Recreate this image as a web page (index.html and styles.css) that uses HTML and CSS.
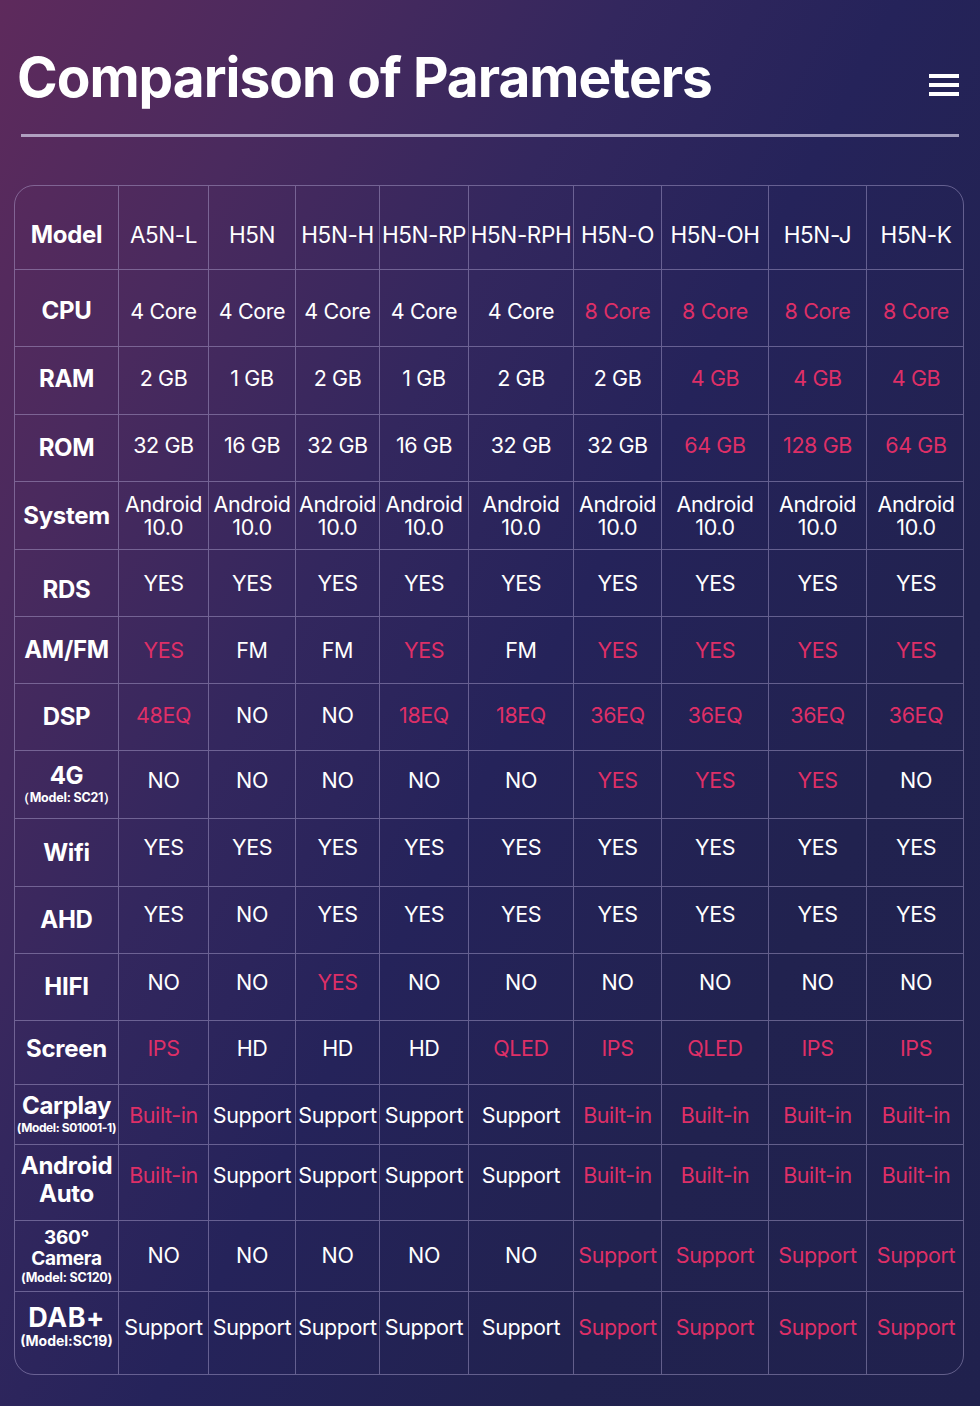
FILE: index.html
```html
<!DOCTYPE html>
<html lang="en">
<head>
<meta charset="utf-8">
<title>Comparison of Parameters</title>
<link rel="stylesheet" href="styles.css">
</head>
<body>
<div class="page">
  <header class="header">
    <h1 class="title">Comparison of Parameters</h1>
    <button class="menu" aria-label="Menu"><span></span><span></span><span></span></button>
  </header>
  <div class="divider"></div>

  <div class="table-wrap">
    <table class="spec">
      <colgroup>
        <col style="width:104px"><col style="width:90px"><col style="width:87px"><col style="width:84px"><col style="width:89px">
        <col style="width:105px"><col style="width:88px"><col style="width:107px"><col style="width:98px"><col style="width:98px">
      </colgroup>
      <tr class="r-head">
        <th>Model</th><td>A5N-L</td><td>H5N</td><td>H5N-H</td><td>H5N-RP</td><td>H5N-RPH</td><td>H5N-O</td><td>H5N-OH</td><td>H5N-J</td><td>H5N-K</td>
      </tr>
      <tr class="r-cpu">
        <th>CPU</th><td>4 Core</td><td>4 Core</td><td>4 Core</td><td>4 Core</td><td>4 Core</td><td class="hl">8 Core</td><td class="hl">8 Core</td><td class="hl">8 Core</td><td class="hl">8 Core</td>
      </tr>
      <tr class="r-68 lift6 thlift4">
        <th>RAM</th><td>2 GB</td><td>1 GB</td><td>2 GB</td><td>1 GB</td><td>2 GB</td><td>2 GB</td><td class="hl">4 GB</td><td class="hl">4 GB</td><td class="hl">4 GB</td>
      </tr>
      <tr class="r-67 lift6">
        <th>ROM</th><td>32 GB</td><td>16 GB</td><td>32 GB</td><td>16 GB</td><td>32 GB</td><td>32 GB</td><td class="hl">64 GB</td><td class="hl">128 GB</td><td class="hl">64 GB</td>
      </tr>
      <tr class="r-68 sys">
        <th>System</th><td>Android<br>10.0</td><td>Android<br>10.0</td><td>Android<br>10.0</td><td>Android<br>10.0</td><td>Android<br>10.0</td><td>Android<br>10.0</td><td>Android<br>10.0</td><td>Android<br>10.0</td><td>Android<br>10.0</td>
      </tr>
      <tr class="r-67 rds">
        <th>RDS</th><td>YES</td><td>YES</td><td>YES</td><td>YES</td><td>YES</td><td>YES</td><td>YES</td><td>YES</td><td>YES</td>
      </tr>
      <tr class="r-67">
        <th>AM/FM</th><td class="hl">YES</td><td>FM</td><td>FM</td><td class="hl">YES</td><td>FM</td><td class="hl">YES</td><td class="hl">YES</td><td class="hl">YES</td><td class="hl">YES</td>
      </tr>
      <tr class="r-67 lift4">
        <th>DSP</th><td class="hl">48EQ</td><td>NO</td><td>NO</td><td class="hl">18EQ</td><td class="hl">18EQ</td><td class="hl">36EQ</td><td class="hl">36EQ</td><td class="hl">36EQ</td><td class="hl">36EQ</td>
      </tr>
      <tr class="r-68 lift10">
        <th><span class="big">4G</span><span class="sub">（Model: SC21）</span></th><td>NO</td><td>NO</td><td>NO</td><td>NO</td><td>NO</td><td class="hl">YES</td><td class="hl">YES</td><td class="hl">YES</td><td>NO</td>
      </tr>
      <tr class="r-68 lift12">
        <th>Wifi</th><td>YES</td><td>YES</td><td>YES</td><td>YES</td><td>YES</td><td>YES</td><td>YES</td><td>YES</td><td>YES</td>
      </tr>
      <tr class="r-67 lift12">
        <th>AHD</th><td>YES</td><td>NO</td><td>YES</td><td>YES</td><td>YES</td><td>YES</td><td>YES</td><td>YES</td><td>YES</td>
      </tr>
      <tr class="r-67 lift10">
        <th>HIFI</th><td>NO</td><td>NO</td><td class="hl">YES</td><td>NO</td><td>NO</td><td>NO</td><td>NO</td><td>NO</td><td>NO</td>
      </tr>
      <tr class="r-64 lift10 thlift8">
        <th>Screen</th><td class="hl">IPS</td><td>HD</td><td>HD</td><td>HD</td><td class="hl">QLED</td><td class="hl">IPS</td><td class="hl">QLED</td><td class="hl">IPS</td><td class="hl">IPS</td>
      </tr>
      <tr class="r-60">
        <th><span class="big">Carplay</span><span class="sub tiny">(Model: S01001-1)</span></th><td class="hl">Built-in</td><td>Support</td><td>Support</td><td>Support</td><td>Support</td><td class="hl">Built-in</td><td class="hl">Built-in</td><td class="hl">Built-in</td><td class="hl">Built-in</td>
      </tr>
      <tr class="r-76 lift16 thlift6">
        <th><span class="big two">Android<br>Auto</span></th><td class="hl">Built-in</td><td>Support</td><td>Support</td><td>Support</td><td>Support</td><td class="hl">Built-in</td><td class="hl">Built-in</td><td class="hl">Built-in</td><td class="hl">Built-in</td>
      </tr>
      <tr class="r-71 lift2">
        <th><span class="mid">360°<br>Camera</span><span class="sub">(Model: SC120)</span></th><td>NO</td><td>NO</td><td>NO</td><td>NO</td><td>NO</td><td class="hl">Support</td><td class="hl">Support</td><td class="hl">Support</td><td class="hl">Support</td>
      </tr>
      <tr class="r-82 lift12 thlift14">
        <th><span class="big dab">DAB+</span><span class="sub dabsub">(Model:SC19)</span></th><td>Support</td><td>Support</td><td>Support</td><td>Support</td><td>Support</td><td class="hl">Support</td><td class="hl">Support</td><td class="hl">Support</td><td class="hl">Support</td>
      </tr>
    </table>
  </div>
</div>
</body>
</html>
```
FILE: styles.css
```css
* { box-sizing: border-box; }

html, body {
  margin: 0;
  padding: 0;
}

body {
  width: 980px;
  min-height: 1406px;
  background: linear-gradient(118deg, #5e2a5c 0%, #4a2a5e 18%, #33275e 36%, #25235a 52%, #21224f 75%, #20214d 100%);
  font-family: Inter, "Noto Sans", "Liberation Sans", sans-serif;
  color: #ffffff;
}

.page {
  padding-top: 50px;
}

.header {
  display: flex;
  justify-content: space-between;
  align-items: flex-start;
  padding: 0 21px 0 17px;
}

.title {
  margin: 0;
  font-size: 55px;
  line-height: 55px;
  font-weight: 700;
  letter-spacing: -1px;
  color: #ffffff;
}

.menu {
  margin-top: 24px;
  width: 30px;
  padding: 0;
  border: 0;
  background: transparent;
  display: flex;
  flex-direction: column;
  gap: 5px;
}

.menu span {
  display: block;
  width: 30px;
  height: 4px;
  background: #ffffff;
}

.divider {
  margin: 29px 21px 0 21px;
  height: 3px;
  background: rgba(210, 206, 232, 0.72);
}

.table-wrap {
  margin: 48px 0 0 14px;
  width: 950px;
  border: 1px solid rgba(190, 180, 225, 0.42);
  border-radius: 20px;
  overflow: hidden;
}

.spec {
  width: 948px;
  table-layout: fixed;
  border-collapse: separate;
  border-spacing: 0;
}

.spec th,
.spec td {
  padding: 0;
  text-align: center;
  vertical-align: middle;
  border-right: 1px solid rgba(190, 180, 225, 0.42);
  border-bottom: 1px solid rgba(190, 180, 225, 0.42);
  white-space: nowrap;
}

.spec tr > *:last-child { border-right: 0; }
.spec tr:last-child > * { border-bottom: 0; }

.spec td {
  font-size: 21.5px;
  font-weight: 400;
  letter-spacing: -0.4px;
  line-height: 24px;
  color: #ffffff;
}

.spec td.hl { color: #de2f67; }

.spec th {
  font-size: 24px;
  font-weight: 700;
  letter-spacing: -0.3px;
  line-height: 26px;
  color: #ffffff;
}

.spec th .big,
.spec th .mid,
.spec th .sub {
  display: block;
}

.spec th .big.two { line-height: 28px; }
.spec th .mid { font-size: 19px; line-height: 21px; }
.spec th .dab { font-size: 27px; line-height: 30px; letter-spacing: 0.5px; }

.spec th .sub {
  font-size: 12.5px;
  line-height: 16px;
  letter-spacing: -0.2px;
  margin-top: 1px;
}

.spec th .sub.tiny {
  font-size: 12px;
  letter-spacing: -0.4px;
}

.spec th .sub.dabsub {
  font-size: 14px;
  letter-spacing: 0;
  margin-top: 0;
}

.r-head th, .r-head td { height: 84px; padding-top: 14px; }
.spec .r-head td { font-size: 22.5px; }
.r-cpu th, .r-cpu td { height: 77px; padding-top: 5px; }
.r-68 > * { height: 68px; }
.r-67 > * { height: 67px; }
.r-64 > * { height: 64px; }
.r-60 > * { height: 60px; }
.r-76 > * { height: 76px; }
.r-71 > * { height: 71px; }
.r-82 > * { height: 82px; }

.spec .sys td { line-height: 23px; }
.rds th { padding-top: 14px; }

.lift2 td { padding-bottom: 2px; }
.lift4 td { padding-bottom: 4px; }
.lift6 td { padding-bottom: 6px; }
.lift10 td { padding-bottom: 10px; }
.lift12 td { padding-bottom: 12px; }
.lift16 td { padding-bottom: 16px; }

.thlift4 th { padding-bottom: 4px; }
.thlift6 th { padding-bottom: 6px; }
.thlift8 th { padding-bottom: 8px; }
.thlift14 th { padding-bottom: 14px; }
```
